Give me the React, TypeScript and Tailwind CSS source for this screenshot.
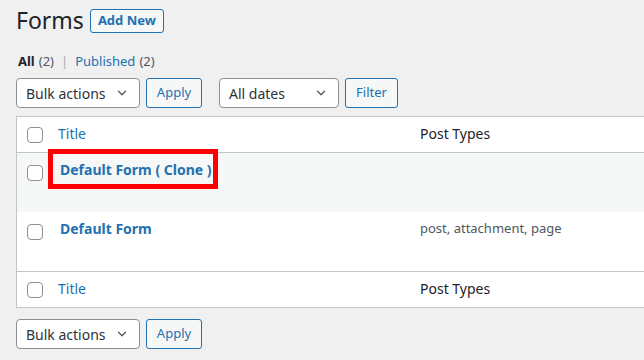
import { ReactNode } from 'react'

const font = { fontFamily: '"Noto Sans", "Open Sans", sans-serif' }

function Chevron() {
  return (
    <svg width="14" height="14" viewBox="0 0 20 20" className="text-[#50575e]">
      <path d="M5 7.5l5 5 5-5" fill="none" stroke="currentColor" strokeWidth="1.8" strokeLinecap="round" strokeLinejoin="round" />
    </svg>
  )
}

function Select({ label, width }: { label: string; width: string }) {
  return (
    <div className={`flex h-[30px] ${width} items-center justify-between rounded-[4px] border border-[#8c8f94] bg-white pl-[9px] pr-[10px] text-[14px] text-[#2c3338]`}>
      <span>{label}</span>
      <Chevron />
    </div>
  )
}

function Button({ children, width }: { children: ReactNode; width: string }) {
  return (
    <div className={`flex h-[30px] ${width} items-center justify-center rounded-[3px] border border-[#2271b1] bg-[#f6f7f7] text-[13px] text-[#2271b1]`}>
      {children}
    </div>
  )
}

function Checkbox() {
  return <span className="block h-4 w-4 rounded-[4px] border border-[#8c8f94] bg-white" />
}

function HeadRow({ border }: { border: 'top' | 'bottom' }) {
  return (
    <div
      className={`grid h-[36px] grid-cols-[33px_360px_1fr] items-center bg-white text-[14px] ${
        border === 'bottom' ? 'border-b border-[#c3c4c7]' : 'border-t border-[#c3c4c7]'
      }`}
    >
      <div className="pl-[10px]">
        <Checkbox />
      </div>
      <div className="pl-[8px] pb-[2px] text-[#2271b1]">Title</div>
      <div className="pl-[10px] pb-[2px] text-[#1d2327]">Post Types</div>
    </div>
  )
}

export default function App() {
  return (
    <div style={font} className="h-[360px] w-[644px] overflow-hidden bg-[#f0f0f1] pl-4">
      {/* Heading */}
      <div className="flex items-center gap-[6px] pt-[6px]">
        <h1 className="text-[23px] leading-[29px] font-normal text-[#1d2327]">Forms</h1>
        <div className="flex h-[24px] items-center rounded-[3px] border border-[#2271b1] bg-[#f6f7f7] px-[7px] text-[13px] font-bold text-[#2271b1]">
          Add New
        </div>
      </div>

      {/* Status links */}
      <div className="mt-[17px] ml-[2px] flex items-center text-[13px] leading-[18px]">
        <span className="font-bold text-[#1d2327]">All</span>
        <span className="ml-1 text-[#50575e]">(2)</span>
        <span className="mx-[7px] text-[#a7aaad]">|</span>
        <span className="text-[#2271b1]">Published</span>
        <span className="ml-1 text-[#50575e]">(2)</span>
      </div>

      {/* Top filters */}
      <div className="mt-[8px] flex items-center">
        <Select label="Bulk actions" width="w-[124px]" />
        <div className="ml-[6px]">
          <Button width="w-[56px]">Apply</Button>
        </div>
        <div className="ml-[17px]">
          <Select label="All dates" width="w-[120px]" />
        </div>
        <div className="ml-[6px]">
          <Button width="w-[53px]">Filter</Button>
        </div>
      </div>

      {/* Table */}
      <div className="mt-[8px] w-[660px] border border-[#c3c4c7]">
        <HeadRow border="bottom" />

        <div className="grid h-[59px] grid-cols-[33px_360px_1fr] items-start bg-[#f6f7f7]">
          <div className="pl-[10px] pt-[12px]">
            <Checkbox />
          </div>
          <div className="relative pl-[10px] pt-[6px] text-[14px] font-bold text-[#2271b1]">
            Default Form ( Clone )
            <span className="absolute left-[-2px] top-[-4px] h-[40px] w-[170px] border-[5px] border-[#ff0000]" />
          </div>
          <div />
        </div>

        <div className="grid h-[59px] grid-cols-[33px_360px_1fr] items-start bg-white">
          <div className="pl-[10px] pt-[12px]">
            <Checkbox />
          </div>
          <div className="pl-[10px] pt-[6px] text-[14px] font-bold text-[#2271b1]">Default Form</div>
          <div className="pl-[10px] pt-[7px] text-[13px] text-[#50575e]">post, attachment, page</div>
        </div>

        <HeadRow border="top" />
      </div>

      {/* Bottom actions */}
      <div className="mt-[11px] flex items-center">
        <Select label="Bulk actions" width="w-[124px]" />
        <div className="ml-[6px]">
          <Button width="w-[56px]">Apply</Button>
        </div>
      </div>
    </div>
  )
}
